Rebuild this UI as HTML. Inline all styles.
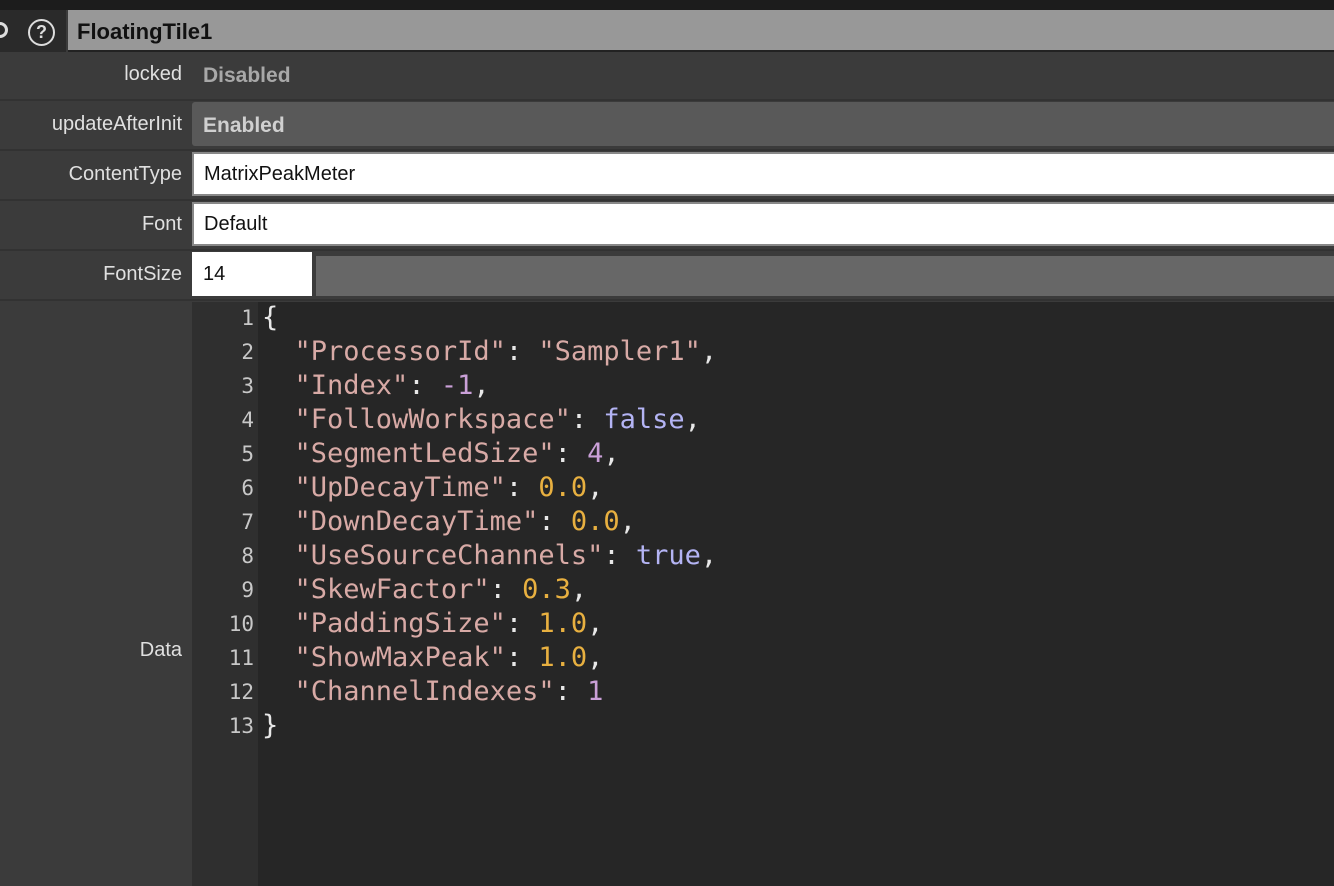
<!DOCTYPE html>
<html><head><meta charset="utf-8"><style>
*{margin:0;padding:0;box-sizing:border-box}
body{width:1334px;height:886px;overflow:hidden;background:#3b3b3b;font-family:"Liberation Sans",sans-serif;position:relative}
.abs{position:absolute}
.lbl{position:absolute;right:1152px;color:#e0e0e0;font-size:20px;text-align:right;white-space:nowrap}
.sep{position:absolute;left:0;width:1334px;height:2px;background:#323232}
.code{font-family:"DejaVu Sans Mono",monospace;font-size:27px;line-height:34px;white-space:pre}
.s{color:#d8aaa6}.n{color:#e8b040}.p{color:#caa0d8}.b{color:#b4b4f4}.w{color:#e8e8e8}
</style></head><body>
<div class="abs" style="left:0;top:0;width:1334px;height:10px;background:#1c1c1c"></div>
<div class="abs" style="left:0;top:10px;width:66px;height:42px;background:#2a2a2a"></div>
<div class="abs" style="left:-8px;top:22px;width:16px;height:16px;border:3px solid #ddd;border-radius:50%"></div>
<div class="abs" style="left:28px;top:19px;width:27px;height:27px;border:2.5px solid #ddd;border-radius:50%;color:#ddd;font-weight:bold;font-size:18px;line-height:22px;text-align:center">?</div>
<div class="abs" style="left:68px;top:10px;width:1266px;height:42px;background:#989898;border-bottom:2px solid #222"></div>
<div class="abs" style="left:77px;top:19px;font-size:22px;font-weight:bold;color:#111">FloatingTile1</div>

<div class="lbl" style="top:63px">locked</div>
<div class="abs" style="left:203px;top:64px;font-size:21px;font-weight:bold;color:#a8a8a8">Disabled</div>
<div class="sep" style="top:99px"></div>
<div class="lbl" style="top:113px">updateAfterInit</div>
<div class="abs" style="left:192px;top:102px;width:1142px;height:44px;background:#595959;border-radius:3px 0 0 3px"></div>
<div class="abs" style="left:203px;top:114px;font-size:21px;font-weight:bold;color:#d0d0d0">Enabled</div>
<div class="sep" style="top:149px"></div>
<div class="lbl" style="top:163px">ContentType</div>
<div class="abs" style="left:192px;top:152px;width:1142px;height:44px;background:#fff;border:2px solid #888;border-right:none"></div>
<div class="abs" style="left:204px;top:163px;font-size:20px;color:#111">MatrixPeakMeter</div>
<div class="sep" style="top:199px"></div>
<div class="lbl" style="top:213px">Font</div>
<div class="abs" style="left:192px;top:202px;width:1142px;height:44px;background:#fff;border:2px solid #888;border-right:none"></div>
<div class="abs" style="left:204px;top:213px;font-size:20px;color:#111">Default</div>
<div class="sep" style="top:249px"></div>
<div class="lbl" style="top:263px">FontSize</div>
<div class="abs" style="left:192px;top:252px;width:120px;height:44px;background:#fff"></div>
<div class="abs" style="left:203px;top:263px;font-size:20px;color:#111">14</div>
<div class="abs" style="left:316px;top:256px;width:1018px;height:40px;background:#676767"></div>
<div class="sep" style="top:299px"></div>
<div class="lbl" style="top:639px">Data</div>
<div class="abs" style="left:192px;top:302px;width:66px;height:584px;background:#2f2f2f"></div>
<div class="abs" style="left:258px;top:302px;width:1076px;height:584px;background:#262626"></div>
<div class="abs code" style="left:192px;top:301px;width:62px;text-align:right;color:#c8c8c8;font-size:21px">1
2
3
4
5
6
7
8
9
10
11
12
13</div>
<div class="abs code w" style="left:262px;top:301px"><span class="w">{</span>
  <span class="s">"ProcessorId"</span>: <span class="s">"Sampler1"</span>,
  <span class="s">"Index"</span>: <span class="p">-1</span>,
  <span class="s">"FollowWorkspace"</span>: <span class="b">false</span>,
  <span class="s">"SegmentLedSize"</span>: <span class="p">4</span>,
  <span class="s">"UpDecayTime"</span>: <span class="n">0.0</span>,
  <span class="s">"DownDecayTime"</span>: <span class="n">0.0</span>,
  <span class="s">"UseSourceChannels"</span>: <span class="b">true</span>,
  <span class="s">"SkewFactor"</span>: <span class="n">0.3</span>,
  <span class="s">"PaddingSize"</span>: <span class="n">1.0</span>,
  <span class="s">"ShowMaxPeak"</span>: <span class="n">1.0</span>,
  <span class="s">"ChannelIndexes"</span>: <span class="p">1</span>
}</div>
</body></html>
